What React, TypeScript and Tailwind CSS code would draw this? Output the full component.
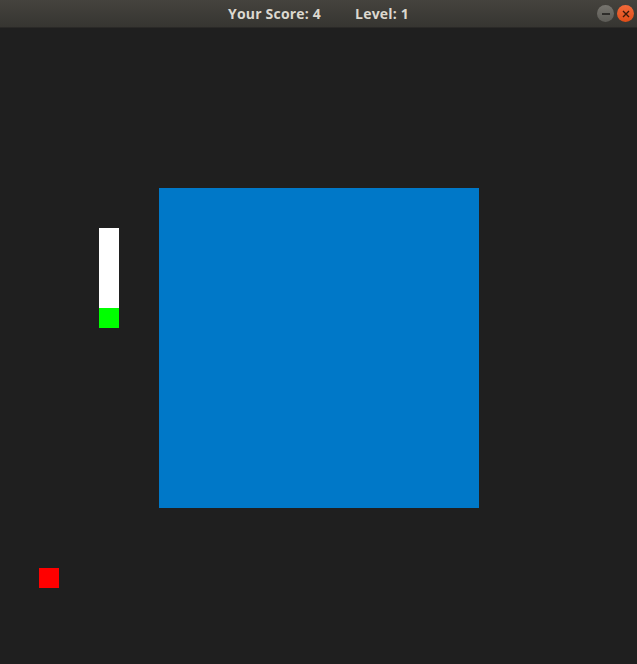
import React from "react";

export default function App() {
  return (
    <div className="w-[637px] h-[664px] bg-[#1f1f1f] flex flex-col overflow-hidden">
      <div className="relative h-[28px] shrink-0 bg-gradient-to-b from-[#45433e] to-[#363531] border-b border-[#2a2927] flex items-center justify-center">
        <div
          className="flex gap-[34px] text-[14px] font-bold tracking-[0.2px] text-[#dcd8cf] pl-[0px]"
          style={{ fontFamily: '"Open Sans", "DejaVu Sans", sans-serif' }}
        >
          <span>Your Score: 4</span>
          <span>Level: 1</span>
        </div>
        <div className="absolute right-[3px] top-[5px] flex gap-[3px]">
          <div className="w-[17px] h-[17px] rounded-full bg-gradient-to-b from-[#77756f] to-[#5c5b56] flex items-center justify-center">
            <div className="w-[8px] h-[2px] bg-[#2e2d2a]" />
          </div>
          <div className="w-[17px] h-[17px] rounded-full bg-gradient-to-b from-[#f26a3a] to-[#df4d16] flex items-center justify-center">
            <svg width="8" height="8" viewBox="0 0 8 8">
              <path d="M1 1L7 7M7 1L1 7" stroke="#3a1a0a" strokeWidth="1.4" />
            </svg>
          </div>
        </div>
      </div>
      <div className="relative flex-1">
        <div className="absolute left-[159px] top-[160px] w-[320px] h-[320px] bg-[#0078c8]" />
        <div className="absolute left-[99px] top-[200px] w-[20px] h-[80px] bg-white" />
        <div className="absolute left-[99px] top-[280px] w-[20px] h-[20px] bg-[#00ff00]" />
        <div className="absolute left-[39px] top-[540px] w-[20px] h-[20px] bg-[#ff0000]" />
      </div>
    </div>
  );
}
